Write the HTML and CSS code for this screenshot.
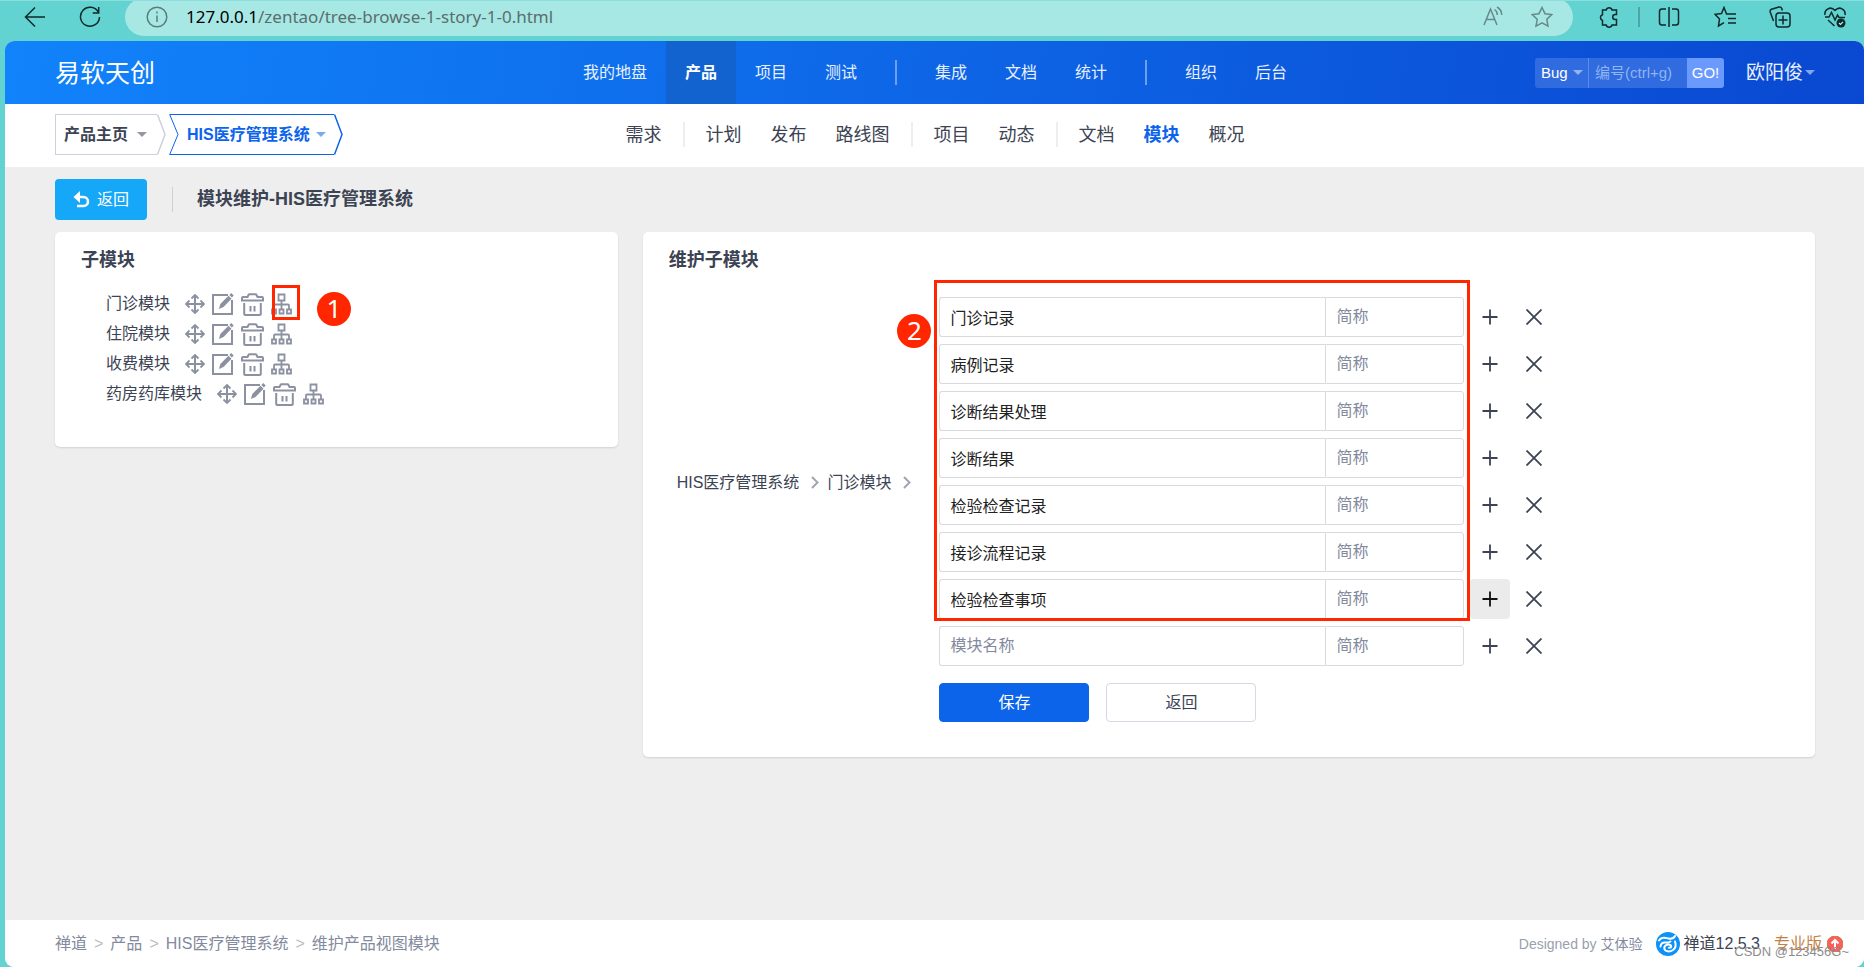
FILE: index.html
```html
<!DOCTYPE html>
<html lang="zh-CN">
<head>
<meta charset="utf-8">
<title>模块维护-HIS医疗管理系统</title>
<link rel="stylesheet" href="styles.css">
</head>
<body>
<svg class="sprite" aria-hidden="true">
  <symbol id="i-move" viewBox="0 0 20 20"><path d="M10 2v16M2 10h16" stroke-width="2"/><path d="M6.500 4.500L10 1l3.500 3.500M6.500 15.500L10 19l3.500-3.500M4.500 6.500L1 10l3.500 3.500M15.500 6.500L19 10l-3.500 3.500" stroke-width="1.800"/></symbol>
  <symbol id="i-edit" viewBox="0 0 22 22"><path d="M16 2H1v19h19V7" stroke-width="2"/><path d="M7 16l1.300-5L16.500 2.800l3 3L11.500 14z" fill="currentColor" stroke="none"/><path d="M18.300 1l2.500 2.500" stroke-width="2.600"/></symbol>
  <symbol id="i-trash" viewBox="0 0 23 23"><path d="M1 7.500V5q0-1 1-1h4.500l1-2q.3-.8 1-.8h6q.7 0 1 .8l1 2H21q1 0 1 1v2.500z" stroke-width="2"/><path d="M3.200 10v11q0 1 1 1h14.600q1 0 1-1V10M9.500 13v5.500M13.500 13v5.500" stroke-width="2"/></symbol>
  <symbol id="i-tree" viewBox="0 0 21 22"><path d="M7.500 1.500h6v6h-6zM1 16.500h4v4H1zM8.500 16.500h4v4h-4zM16 16.500h4v4h-4zM10.500 8v8M3 16v-3.500q0-1 1-1h13q1 0 1 1V16" stroke-width="1.800"/></symbol>
  <symbol id="i-plus" viewBox="0 0 16 16"><path d="M8 .5v15M.5 8h15" stroke-width="1.800"/></symbol>
  <symbol id="i-close" viewBox="0 0 16 16"><path d="M.5 .5l15 15M15.500 .5l-15 15" stroke-width="1.800"/></symbol>
  <symbol id="i-next" viewBox="0 0 8 13"><path d="M1 1l5.500 5.500L1 12" stroke-width="2"/></symbol>
</svg>

<div class="browser">
  <button class="tool" aria-label="后退"><svg viewBox="0 0 22 22"><path d="M21 11H2M11 1.500L1.500 11l9.500 9.500"/></svg></button>
  <button class="tool reload" aria-label="刷新"><svg viewBox="0 0 22 22"><path d="M19.500 6.500A9.500 9.500 0 1 0 20.500 11M19.700 1v6h-6"/></svg></button>
  <div class="address">
    <svg class="info" viewBox="0 0 22 22"><circle cx="11" cy="11" r="9.800"/><path d="M11 9.500v6.500M11 5.500v2"/></svg>
    <span class="url"><b>127.0.0.1</b>/zentao/tree-browse-1-story-1-0.html</span>
    <button class="tool soft" aria-label="朗读"><svg viewBox="0 0 22 22"><path d="M2 19L8.500 3 15 19M4.300 13.500h8.500M12.500 3.500q3 2 2.800 5.500M15 1q5 3 4.700 8"/></svg></button>
    <button class="tool soft" aria-label="收藏"><svg viewBox="0 0 22 22"><path d="M11 1.500l3 6.200 6.700.9-4.900 4.700 1.200 6.800-6-3.300-6 3.300 1.200-6.800L1.300 8.600 8 7.700z"/></svg></button>
  </div>
  <div class="tools">
    <button class="tool" aria-label="扩展"><svg viewBox="0 0 22 22"><path d="M4.500 4h3.700a3 3 0 0 1 5.800 0h4.500v4.500h-1.300a2.500 2.500 0 0 0 0 5h1.300v5.500h-4.500a3 3 0 0 1-5.800 0H4.500v-4.600a3 3 0 0 1 0-5.700z"/></svg></button>
    <i class="bar-line"></i>
    <button class="tool" aria-label="分屏"><svg viewBox="0 0 22 22"><path d="M8 3H4Q1.500 3 1.500 5.500v11Q1.500 19 4 19h4M14 3h4q2.500 0 2.500 2.500v11Q20.500 19 18 19h-4M11 1v20"/></svg></button>
  </div>
  <div class="tools wide">
    <button class="tool" aria-label="收藏夹"><svg viewBox="0 0 22 22"><path d="M14 8h-1.500L10 1.500 7.500 7.500l-6.500.8 4.500 4.800L4.500 20l5.500-3.300M13.500 8H22M14 12.500h8M14 17h8"/></svg></button>
    <button class="tool" aria-label="集锦"><svg viewBox="0 0 22 22"><path d="M4.500 15L1.200 6Q.7 4 2.500 3.200L10 1q2-.4 2.800 1.500l.5 2M8.500 7h9.500q3 0 3 3v8q0 3-3 3h-8q-3 0-3-3v-8q0-3 3-3M14 9.500v9M9.500 14h9"/></svg></button>
    <button class="tool" aria-label="性能"><svg viewBox="0 0 22 22"><path d="M1 9C0 3.500 6.500-.5 11 4.500 15.500-.5 22 3.500 21 9M1 11h4l2.500-4.500L11 14l2.500-5 1.500 2.500h6M4 14l6.500 6"/><circle cx="17" cy="17" r="4.500" fill="currentColor" stroke="none"/><path d="M15 17l1.500 1.500L19 15.800" stroke="#9fe" stroke-width="1.200"/></svg></button>
  </div>
</div>

<div class="page">
  <header class="header">
    <a class="logo" href="#">易软天创</a>
    <nav class="mainnav" aria-label="主导航">
      <a href="#">我的地盘</a><a href="#" class="active">产品</a><a href="#">项目</a><a href="#">测试</a>
      <i class="split"></i>
      <a href="#">集成</a><a href="#">文档</a><a href="#">统计</a>
      <i class="split"></i>
      <a href="#">组织</a><a href="#">后台</a>
    </nav>
    <div class="userarea">
      <form class="search">
        <label class="search-type"><select aria-label="对象类型"><option>Bug</option></select><i class="caret"></i></label>
        <input type="text" aria-label="编号" placeholder="编号(ctrl+g)">
        <button type="button">GO!</button>
      </form>
      <a class="user" href="#">欧阳俊<i class="caret"></i></a>
    </div>
  </header>

  <div class="subheader">
    <div class="crumbs">
      <button class="crumb"><span class="crumb-body first">产品主页<i class="caret"></i></span><svg class="tip" viewBox="0 0 9 41"><path d="M.5 .5L8 20.500 .5 40.500"/></svg></button>
      <button class="crumb current"><svg class="notch" viewBox="0 0 10 41"><path d="M10 .5H.7L9 20.500 .7 40.500H10"/></svg><span class="crumb-body">HIS医疗管理系统<i class="caret"></i></span><svg class="tip" viewBox="0 0 9 41"><path d="M.5 .5L8 20.500 .5 40.500"/></svg></button>
    </div>
    <nav class="subnav" aria-label="产品导航">
      <a href="#">需求</a><i class="split"></i><a href="#">计划</a><a href="#">发布</a><a href="#">路线图</a><i class="split"></i><a href="#">项目</a><a href="#">动态</a><i class="split"></i><a href="#">文档</a><a href="#" class="active">模块</a><a href="#">概况</a>
    </nav>
  </div>

  <main class="main">
    <div class="toolbar">
      <button class="back"><svg viewBox="0 0 17 17"><path d="M3 6h7.500a4.500 4.500 0 0 1 0 9H4" stroke-width="2.600"/><path d="M7 0v12L.5 6z" fill="currentColor" stroke="none"/></svg>返回</button>
      <h1>模块维护-HIS医疗管理系统</h1>
    </div>
    <div class="columns">
      <section class="card side">
        <h2>子模块</h2>
        <ul class="tree">
          <li>门诊模块<span class="acts"><a href="#" aria-label="移动"><svg class="mv"><use href="#i-move"/></svg></a><a href="#" aria-label="编辑"><svg class="ed"><use href="#i-edit"/></svg></a><a href="#" aria-label="删除"><svg class="tr"><use href="#i-trash"/></svg></a><a href="#" aria-label="子模块" class="marked"><svg class="ch"><use href="#i-tree"/></svg><i class="frame"></i><b class="badge">1</b></a></span></li>
          <li>住院模块<span class="acts"><a href="#" aria-label="移动"><svg class="mv"><use href="#i-move"/></svg></a><a href="#" aria-label="编辑"><svg class="ed"><use href="#i-edit"/></svg></a><a href="#" aria-label="删除"><svg class="tr"><use href="#i-trash"/></svg></a><a href="#" aria-label="子模块"><svg class="ch"><use href="#i-tree"/></svg></a></span></li>
          <li>收费模块<span class="acts"><a href="#" aria-label="移动"><svg class="mv"><use href="#i-move"/></svg></a><a href="#" aria-label="编辑"><svg class="ed"><use href="#i-edit"/></svg></a><a href="#" aria-label="删除"><svg class="tr"><use href="#i-trash"/></svg></a><a href="#" aria-label="子模块"><svg class="ch"><use href="#i-tree"/></svg></a></span></li>
          <li>药房药库模块<span class="acts"><a href="#" aria-label="移动"><svg class="mv"><use href="#i-move"/></svg></a><a href="#" aria-label="编辑"><svg class="ed"><use href="#i-edit"/></svg></a><a href="#" aria-label="删除"><svg class="tr"><use href="#i-trash"/></svg></a><a href="#" aria-label="子模块"><svg class="ch"><use href="#i-tree"/></svg></a></span></li>
        </ul>
      </section>
      <section class="card content">
        <h2>维护子模块</h2>
        <form class="editor">
          <div class="path"><a href="#">HIS医疗管理系统</a><svg><use href="#i-next"/></svg><a href="#">门诊模块</a><svg><use href="#i-next"/></svg></div>
          <div class="fields">
            <div class="rows saved">
              <div class="row"><input class="name" aria-label="模块名称" value="门诊记录"><input class="short" aria-label="简称" placeholder="简称"><button type="button" aria-label="添加"><svg><use href="#i-plus"/></svg></button><button type="button" aria-label="删除"><svg><use href="#i-close"/></svg></button></div>
              <div class="row"><input class="name" aria-label="模块名称" value="病例记录"><input class="short" aria-label="简称" placeholder="简称"><button type="button" aria-label="添加"><svg><use href="#i-plus"/></svg></button><button type="button" aria-label="删除"><svg><use href="#i-close"/></svg></button></div>
              <div class="row"><input class="name" aria-label="模块名称" value="诊断结果处理"><input class="short" aria-label="简称" placeholder="简称"><button type="button" aria-label="添加"><svg><use href="#i-plus"/></svg></button><button type="button" aria-label="删除"><svg><use href="#i-close"/></svg></button></div>
              <div class="row"><input class="name" aria-label="模块名称" value="诊断结果"><input class="short" aria-label="简称" placeholder="简称"><button type="button" aria-label="添加"><svg><use href="#i-plus"/></svg></button><button type="button" aria-label="删除"><svg><use href="#i-close"/></svg></button></div>
              <div class="row"><input class="name" aria-label="模块名称" value="检验检查记录"><input class="short" aria-label="简称" placeholder="简称"><button type="button" aria-label="添加"><svg><use href="#i-plus"/></svg></button><button type="button" aria-label="删除"><svg><use href="#i-close"/></svg></button></div>
              <div class="row"><input class="name" aria-label="模块名称" value="接诊流程记录"><input class="short" aria-label="简称" placeholder="简称"><button type="button" aria-label="添加"><svg><use href="#i-plus"/></svg></button><button type="button" aria-label="删除"><svg><use href="#i-close"/></svg></button></div>
              <div class="row"><input class="name" aria-label="模块名称" value="检验检查事项"><input class="short" aria-label="简称" placeholder="简称"><button type="button" aria-label="添加" class="hover"><svg><use href="#i-plus"/></svg></button><button type="button" aria-label="删除"><svg><use href="#i-close"/></svg></button></div>
              <i class="frame"></i><b class="badge">2</b>
            </div>
            <div class="rows">
              <div class="row"><input class="name" aria-label="模块名称" placeholder="模块名称"><input class="short" aria-label="简称" placeholder="简称"><button type="button" aria-label="添加"><svg><use href="#i-plus"/></svg></button><button type="button" aria-label="删除"><svg><use href="#i-close"/></svg></button></div>
            </div>
            <div class="submit"><button type="button" class="primary">保存</button><button type="button">返回</button></div>
          </div>
        </form>
      </section>
    </div>
  </main>

  <footer class="footer">
    <nav class="trail" aria-label="位置"><a href="#">禅道</a><i>&gt;</i><a href="#">产品</a><i>&gt;</i><a href="#">HIS医疗管理系统</a><i>&gt;</i><span>维护产品视图模块</span></nav>
    <div class="powered">
      <span class="design">Designed by <a href="#">艾体验</a></span>
      <a class="version" href="#"><svg viewBox="0 0 24 24"><circle cx="12" cy="12" r="12" fill="#0d92f7"/><path d="M3 8.500C6 4 9.500 6 12.500 6.500S18 6 19 4M4.500 14.500q.5-4.500 5-4 3 .3 5-1M19 9.500q2 5.500-2 8.500-4 2.500-7.500.5-2.500-2.500 0-5 3-2 5.500 0 .8 2.500-2 2.300" fill="none" stroke="#fff" stroke-width="2" stroke-linecap="round"/></svg>禅道12.5.3</a>
      <a class="pro" href="#">专业版<svg viewBox="0 0 16 16"><circle cx="8" cy="8" r="8" fill="#ff5d5d"/><path d="M8 13V4M4.500 7.500L8 4l3.500 3.500" fill="none" stroke="#fff" stroke-width="2"/></svg></a>
      <span class="watermark">CSDN @123456G~</span>
    </div>
  </footer>
</div>
</body>
</html>
```

FILE: styles.css
```css
* { box-sizing: border-box; }
body {
  margin: 0;
  min-height: 100vh;
  display: flex;
  flex-direction: column;
  background: #62d3d1;
  color: #3c4353;
  font: 16px/20px "Liberation Sans", "Noto Sans CJK SC", sans-serif;
}
a { color: inherit; text-decoration: none; }
button, input, select { font: inherit; color: inherit; }
button { border: 0; padding: 0; background: none; cursor: pointer; }
i { font-style: normal; }
svg { fill: none; stroke: currentColor; flex: none; display: block; }
.sprite { position: absolute; width: 0; height: 0; }
.caret { display: inline-block; border: 5px solid transparent; border-top-color: currentColor; border-bottom: 0; opacity: .55; }

/* browser bar */
.browser {
  display: flex;
  align-items: center;
  height: 41px;
  padding: 0 18px 9px 24px;
  border-top: 1px solid #8adfdd;
  overflow: hidden;
  color: #10292b;
}
.tool { width: 22px; height: 22px; }
.tool svg, .info { width: 22px; height: 22px; stroke-width: 1.500; }
.tool.reload { margin: 0 24px 0 33px; }
.address {
  flex: 1;
  display: flex;
  align-items: center;
  height: 38px;
  padding: 0 20px 0 21px;
  border-radius: 19px;
  background: #a8e8e4;
}
.info { color: #5c7c7c; }
.url { flex: 1; margin-left: 18px; font: 17px/22px "Noto Sans", sans-serif; color: #5a6e6e; }
.url b { font-weight: 400; color: #000; }
.soft { margin-left: 27px; color: #668a89; }
.tools { display: flex; align-items: center; gap: 18px; margin-left: 25px; }
.tools.wide { gap: 33px; margin-left: 34px; }
.bar-line { width: 2px; height: 20px; background: #4da5a4; }

/* page frame */
.page {
  flex: 1;
  display: flex;
  flex-direction: column;
  margin-left: 5px;
  border-radius: 9px;
  background: #eee;
  overflow: hidden;
}
.header, .subheader {
  display: grid;
  grid-template-columns: 1fr auto 1fr;
  align-items: center;
  height: 63px;
  padding: 0 49px 0 50px;
}
.header { background: linear-gradient(100deg, #1183fb, #0a48d1); color: #e7f0ff; }
.logo { font-size: 25px; line-height: 30px; color: #fff; }
.mainnav, .subnav { display: flex; align-items: center; }
.mainnav a { padding: 0 19px; line-height: 63px; }
.mainnav a.active { background: #1263d0; color: #fff; font-weight: 700; }
.mainnav .split { width: 2px; height: 25px; margin: 0 19px; background: #6d9ff3; }
.userarea { justify-self: end; display: flex; align-items: center; gap: 22px; }
.search { display: flex; height: 30px; font-size: 15px; border-radius: 3px; overflow: hidden; }
.search-type { display: flex; align-items: center; width: 54px; padding: 0 5px 0 6px; background: #306bdf; border-right: 1px solid #5c8ae8; }
.search-type select { flex: 1; width: 30px; appearance: none; border: 0; padding: 0; background: none; color: #fff; outline: 0; }
.search input { width: 98px; padding: 0 6px; border: 0; background: #306bdf; outline: 0; }
.search input::placeholder { color: #91b4f2; }
.search button { width: 37px; background: #6b9aff; color: #fff; }
.user { display: flex; align-items: center; gap: 2px; font-size: 19px; }

/* product bar */
.subheader { background: #fff; padding-bottom: 2px; }
.crumbs { display: flex; gap: 3px; }
.crumb { display: flex; height: 41px; font-weight: 700; color: #cbd0db; }
.crumb.current { color: #0c64eb; }
.crumb-body { display: flex; align-items: center; gap: 9px; height: 41px; padding: 0 10px 0 0; border: solid #cbd0db; border-width: 1px 0; color: #3c4353; }
.crumb-body.first { padding-left: 8px; border-left-width: 1px; }
.crumb.current .crumb-body { gap: 6px; padding: 0 8px; border-color: #0c64eb; color: #0c64eb; }
.tip { width: 9px; height: 41px; stroke-width: 1.500; }
.notch { width: 10px; height: 41px; }
.subnav { font-size: 18px; }
.subnav a + a { margin-left: 29px; }
.subnav .split { width: 2px; height: 25px; margin: 0 21px; background: #eee; }
.subnav .active { color: #0c64eb; font-weight: 700; }

/* content */
.main { flex: 1; padding: 12px 49px 24px 50px; }
.toolbar { display: flex; align-items: center; height: 41px; margin-bottom: 12px; }
.back { display: flex; align-items: center; justify-content: center; gap: 7px; width: 92px; height: 41px; border-radius: 4px; background: #16a8f8; color: #fff; }
.back svg { width: 17px; height: 17px; }
.toolbar h1 { margin: 0 0 0 25px; padding-left: 24px; border-left: 1px solid #cfcfcf; font-size: 18px; line-height: 25px; }
.columns { display: grid; grid-template-columns: 12fr 25fr; gap: 25px; align-items: start; }
.card { border-radius: 5px; background: #fff; box-shadow: 0 1px 2px rgba(0, 0, 0, .12); padding: 16px 26px 0; }
.card h2 { margin: 0; font-size: 18px; line-height: 24px; }
.tree { list-style: none; margin: 0; padding: 17px 0 38px 25px; }
.tree li { display: flex; align-items: center; height: 30px; }
.acts { display: flex; align-items: center; gap: 7px; margin-left: 15px; color: #8b91a0; }
.marked { position: relative; }
.mv { width: 20px; height: 20px; }
.ed { width: 22px; height: 22px; }
.tr { width: 23px; height: 23px; }
.ch { width: 21px; height: 22px; }
.frame { position: absolute; border: 3px solid #ff2600; pointer-events: none; }
.badge {
  position: absolute;
  width: 34px;
  height: 34px;
  border-radius: 50%;
  background: #ff2600;
  color: #fff;
  font: 26px/32px "Noto Sans", sans-serif;
  text-align: center;
}
.marked .frame { left: 1px; top: -8px; width: 28px; height: 35px; }
.marked .badge { left: 46px; top: -1px; }

.editor { display: flex; align-items: flex-start; padding: 25px 0 35px 8px; }
.path { display: flex; align-items: center; height: 371px; gap: 12px; margin-right: 28px; white-space: nowrap; }
.path svg { width: 8px; height: 13px; color: #a0a5b2; }
.path svg + a { margin-left: -4px; }
.fields { flex: 0 1 615px; }
.rows { position: relative; display: grid; gap: 7px; margin-bottom: 7px; }
.row { display: flex; align-items: center; height: 40px; }
.row input { height: 40px; min-width: 0; padding: 0 10px; border: 1px solid #d8dade; background: #fff; color: #222; outline: 0; }
.row .name { flex: 1; border-radius: 3px 0 0 3px; border-right: 0; }
.row .short { flex: none; width: 139px; margin-right: 6px; border-radius: 0 3px 3px 0; }
.row input::placeholder { color: #838a9d; }
.row button { display: flex; flex: none; align-items: center; justify-content: center; width: 40px; height: 40px; border-radius: 4px; }
.row button + button { margin-left: 4px; }
.row button.hover { background: #ebebeb; color: #111; }
.row button svg { width: 16px; height: 16px; }
.saved .frame { inset: -17px 84px -2px -5px; }
.saved .badge { left: -42px; top: 17px; }
.submit { display: flex; gap: 17px; padding-top: 10px; }
.submit button { width: 150px; height: 39px; border: 1px solid #d5d9e4; border-radius: 4px; }
.submit .primary { border-color: #0c64eb; background: #0c64eb; color: #fff; }

/* footer */
.footer { display: flex; align-items: center; justify-content: space-between; height: 47px; padding: 0 21px 0 50px; background: #fff; }
.trail { display: flex; gap: 7px; color: #838a9d; }
.trail i { color: #bbb; }
.powered { position: relative; display: flex; align-items: center; gap: 14px; }
.design { font-size: 14px; color: #9a9fac; }
.design a { color: #838a9d; }
.version, .pro { display: flex; align-items: center; gap: 3px; }
.version svg { width: 24px; height: 24px; stroke: none; }
.pro { gap: 5px; color: #c47f43; }
.pro svg { width: 16px; height: 16px; }
.watermark { position: absolute; right: -6px; bottom: -5px; font-size: 13px; line-height: 18px; color: #8c8c8c; white-space: nowrap; }
```
